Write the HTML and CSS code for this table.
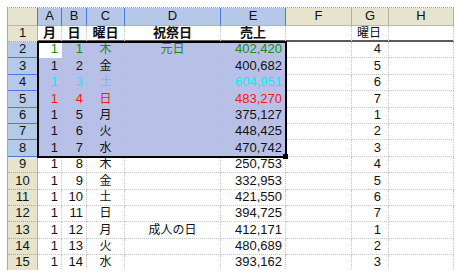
FILE: index.html
```html
<!DOCTYPE html>
<html lang="ja">
<head>
<meta charset="utf-8">
<title>Sheet</title>
<link rel="stylesheet" href="styles.css">
</head>
<body>
<div class="sheet">
  <div class="hd corner"></div>
  <div class="hd s">A</div>
  <div class="hd s">B</div>
  <div class="hd s">C</div>
  <div class="hd s">D</div>
  <div class="hd s">E</div>
  <div class="hd">F</div>
  <div class="hd">G</div>
  <div class="hd">H</div>

  <div class="rh">1</div>
  <div class="c t1 m">月</div>
  <div class="c t1 m">日</div>
  <div class="c t1 m">曜日</div>
  <div class="c t1 m">祝祭日</div>
  <div class="c t1 m">売上</div>
  <div class="c t1"></div>
  <div class="c t1 m g1">曜日</div>
  <div class="c t1"></div>

  <div class="rh s">2</div>
  <div class="c act n gr">1</div>
  <div class="c s n gr">1</div>
  <div class="c s m j gr">木</div>
  <div class="c s m j gr">元日</div>
  <div class="c s n gr">402,420</div>
  <div class="c"></div>
  <div class="c n gv">4</div>
  <div class="c"></div>

  <div class="rh s">3</div>
  <div class="c s n">1</div>
  <div class="c s n">2</div>
  <div class="c s m j">金</div>
  <div class="c s"></div>
  <div class="c s n">400,682</div>
  <div class="c"></div>
  <div class="c n gv">5</div>
  <div class="c"></div>

  <div class="rh s">4</div>
  <div class="c s n cy">1</div>
  <div class="c s n cy">3</div>
  <div class="c s m j cy">土</div>
  <div class="c s"></div>
  <div class="c s n cy">604,951</div>
  <div class="c"></div>
  <div class="c n gv">6</div>
  <div class="c"></div>

  <div class="rh s">5</div>
  <div class="c s n rd">1</div>
  <div class="c s n rd">4</div>
  <div class="c s m j rd">日</div>
  <div class="c s"></div>
  <div class="c s n rd">483,270</div>
  <div class="c"></div>
  <div class="c n gv">7</div>
  <div class="c"></div>

  <div class="rh s">6</div>
  <div class="c s n">1</div>
  <div class="c s n">5</div>
  <div class="c s m j">月</div>
  <div class="c s"></div>
  <div class="c s n">375,127</div>
  <div class="c"></div>
  <div class="c n gv">1</div>
  <div class="c"></div>

  <div class="rh s">7</div>
  <div class="c s n">1</div>
  <div class="c s n">6</div>
  <div class="c s m j">火</div>
  <div class="c s"></div>
  <div class="c s n">448,425</div>
  <div class="c"></div>
  <div class="c n gv">2</div>
  <div class="c"></div>

  <div class="rh s">8</div>
  <div class="c s n">1</div>
  <div class="c s n">7</div>
  <div class="c s m j">水</div>
  <div class="c s"></div>
  <div class="c s n">470,742</div>
  <div class="c"></div>
  <div class="c n gv">3</div>
  <div class="c"></div>

  <div class="rh">9</div>
  <div class="c n">1</div>
  <div class="c n">8</div>
  <div class="c m j">木</div>
  <div class="c"></div>
  <div class="c n">250,753</div>
  <div class="c"></div>
  <div class="c n gv">4</div>
  <div class="c"></div>

  <div class="rh">10</div>
  <div class="c n">1</div>
  <div class="c n">9</div>
  <div class="c m j">金</div>
  <div class="c"></div>
  <div class="c n">332,953</div>
  <div class="c"></div>
  <div class="c n gv">5</div>
  <div class="c"></div>

  <div class="rh">11</div>
  <div class="c n">1</div>
  <div class="c n">10</div>
  <div class="c m j">土</div>
  <div class="c"></div>
  <div class="c n">421,550</div>
  <div class="c"></div>
  <div class="c n gv">6</div>
  <div class="c"></div>

  <div class="rh">12</div>
  <div class="c n">1</div>
  <div class="c n">11</div>
  <div class="c m j">日</div>
  <div class="c"></div>
  <div class="c n">394,725</div>
  <div class="c"></div>
  <div class="c n gv">7</div>
  <div class="c"></div>

  <div class="rh">13</div>
  <div class="c n">1</div>
  <div class="c n">12</div>
  <div class="c m j">月</div>
  <div class="c m j">成人の日</div>
  <div class="c n">412,171</div>
  <div class="c"></div>
  <div class="c n gv">1</div>
  <div class="c"></div>

  <div class="rh">14</div>
  <div class="c n">1</div>
  <div class="c n">13</div>
  <div class="c m j">火</div>
  <div class="c"></div>
  <div class="c n">480,689</div>
  <div class="c"></div>
  <div class="c n gv">2</div>
  <div class="c"></div>

  <div class="rh">15</div>
  <div class="c n">1</div>
  <div class="c n">14</div>
  <div class="c m j">水</div>
  <div class="c"></div>
  <div class="c n">393,162</div>
  <div class="c"></div>
  <div class="c n gv">3</div>
  <div class="c"></div>

  <div class="selbox"><div class="handle"></div></div>
</div>
</body>
</html>
```

FILE: styles.css
```css
html, body {
  margin: 0;
  padding: 0;
  background: #ffffff;
}

body {
  font-family: "Liberation Sans", "Noto Sans CJK JP", sans-serif;
  font-size: 13px;
  color: #111111;
}

.sheet {
  position: relative;
  box-sizing: border-box;
  margin: 7px 0 0 7px;
  width: 447px;
  height: 263px;
  overflow: hidden;
  border-top: 1px dotted #9a9a9a;
  border-left: 1px solid #a8a8a8;
  display: grid;
  grid-template-columns: 30px 24px 25px 38px 96px 65px 66px 37px 65px;
  grid-template-rows: 18px 16px repeat(14, 16.4px);
}

.hd,
.rh,
.c {
  box-sizing: border-box;
  display: flex;
  align-items: flex-end;
  white-space: nowrap;
  line-height: 14px;
}

.hd {
  justify-content: center;
  padding-bottom: 2px;
  background: #e6e4cd;
  border-right: 1px solid #b0b0a8;
  border-bottom: 1px solid #b8b8b0;
}

.hd.s {
  background: #b5c8e8;
  border-right-color: #4f78d6;
  border-bottom-color: #9fb3dc;
}

.hd.corner {
  border-right-color: #4f78d6;
}

.rh {
  justify-content: center;
  padding-bottom: 1px;
  background: #e6e4cd;
  border-right: 1px solid #b0b0a8;
  border-bottom: 1px dotted #a8a8a0;
}

.rh.s {
  background: #b5cae8;
  border-right-color: #4f78d6;
  border-bottom: 1px solid #4f78d6;
}

.c {
  padding: 0 3px 1px 3px;
  border-right: 1px dotted #c4c4c4;
  border-bottom: 1px dotted #c4c4c4;
}

.c.s {
  background: #b9c0e8;
  border-color: #b4bbe4;
}

.c.act {
  background: #ffffff;
  border-color: transparent;
}

.c.t1 {
  border-bottom: 2px solid #5a5a5a;
  padding-bottom: 0;
  font-weight: bold;
}

.c.t1.g1 {
  font-weight: normal;
  font-size: 12px;
  justify-content: flex-end;
  padding-right: 7px;
}

.n {
  justify-content: flex-end;
}

.m {
  justify-content: center;
}

.j {
  font-size: 12px;
}

.gv {
  padding-right: 7px;
}

.gr {
  color: #158a15;
}

.cy {
  color: #00f0f0;
}

.rd {
  color: #f01818;
}

.selbox {
  position: absolute;
  grid-column: 2 / 7;
  grid-row: 3 / 10;
  inset: -1px -1px -1px -1px;
  border: 2px solid #000000;
  pointer-events: none;
}

.handle {
  position: absolute;
  right: -4px;
  bottom: -4px;
  width: 5px;
  height: 5px;
  background: #000000;
  border-right: 1px solid #ffffff;
  border-bottom: 1px solid #ffffff;
}
```
